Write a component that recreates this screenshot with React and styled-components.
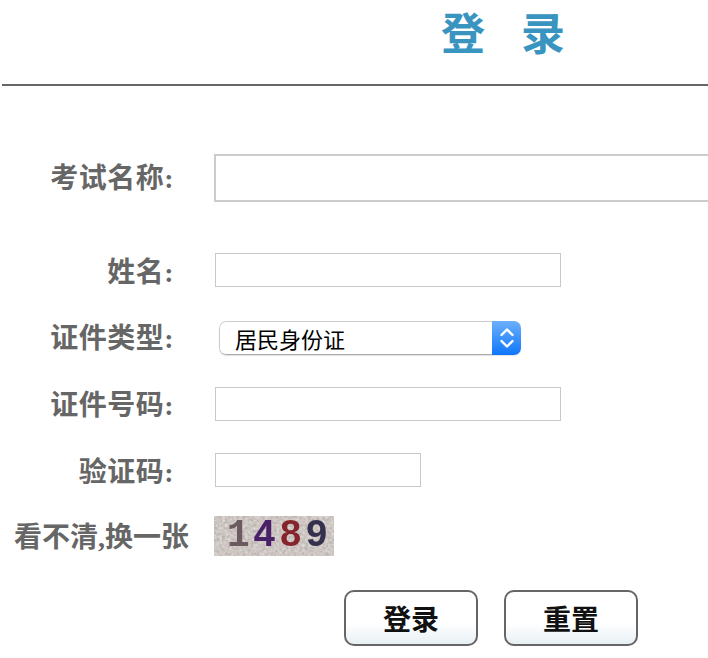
import React from 'react'
import styled, { createGlobalStyle } from 'styled-components'

const GlobalStyle = createGlobalStyle`
  html, body {
    margin: 0;
    background: #fff;
    overflow: hidden;
  }
  body {
    font-family: "Liberation Serif", "Noto Sans CJK SC", serif;
  }
`

const Page = styled.div`
  width: 708px;
  height: 658px;
  overflow: hidden;
`

const Header = styled.header`
  height: 86px;
  margin-left: 2px;
  padding-left: 439px;
  box-sizing: border-box;
  border-bottom: 2px solid #666;
`

const Title = styled.h1`
  margin: 0;
  padding-top: 6px;
  font-size: 44px;
  line-height: 60px;
  font-weight: bold;
  letter-spacing: 36px;
  white-space: nowrap;
  color: #3a94c0;
`

const Form = styled.form`
  display: flex;
  flex-direction: column;
  padding-top: 68px;
`

const Row = styled.div`
  display: flex;
  align-items: center;
  height: ${(p) => p.$height}px;
  margin-bottom: ${(p) => p.$gap}px;
`

const Label = styled.label`
  flex: none;
  box-sizing: border-box;
  width: 215px;
  padding-right: 41px;
  padding-bottom: ${(p) => p.$lift || 0}px;
  text-align: right;
  font-size: 28px;
  font-weight: bold;
  letter-spacing: 0.5px;
  color: #666;
  white-space: nowrap;
`

const WideInput = styled.input`
  flex: none;
  box-sizing: border-box;
  width: 540px;
  height: 48px;
  margin-left: -1px;
  border: 2px solid #ccc;
  background: #fff;
  outline: none;
`

const TextInput = styled.input`
  flex: none;
  box-sizing: border-box;
  width: ${(p) => p.$width}px;
  height: 34px;
  border: 1px solid #c8c8c8;
  background: #fff;
  outline: none;
`

const SelectBox = styled.div`
  flex: none;
  display: flex;
  box-sizing: border-box;
  width: 302px;
  height: 34px;
  margin-left: 4px;
  border-radius: 7px;
  background: #fff;
  box-shadow: 0 1px 1px rgba(0, 0, 0, 0.12);
  overflow: hidden;
`

const SelectValue = styled.span`
  flex: 1;
  padding: 6px 0 0 15px;
  border: 1px solid #ccc;
  border-right: none;
  border-bottom-color: #aaa;
  border-radius: 7px 0 0 7px;
  font-size: 22px;
  line-height: 26px;
  color: #000;
`

const SelectCap = styled.span`
  flex: none;
  display: flex;
  align-items: center;
  justify-content: center;
  width: 29px;
  background: linear-gradient(#6cb0fb, #0f76fb);
`

const CaptchaLabel = styled.a`
  flex: none;
  box-sizing: border-box;
  width: 214px;
  padding-left: 14px;
  padding-bottom: 2px;
  font-size: 28px;
  font-weight: bold;
  color: #666;
  white-space: nowrap;
`

const Captcha = styled.div`
  position: relative;
  flex: none;
  display: flex;
  align-items: center;
  justify-content: space-between;
  box-sizing: border-box;
  width: 120px;
  height: 40px;
  padding: 0 6px 0 13px;
  background: #b5aca8;
`

const CaptchaNoise = styled.svg`
  position: absolute;
  inset: 0;
`

const Digit = styled.span`
  position: relative;
  font-family: "Liberation Mono", monospace;
  font-size: 38px;
  line-height: 40px;
  font-weight: bold;
  color: ${(p) => p.$color};
  filter: blur(0.7px);
`

const Actions = styled.div`
  display: flex;
  gap: 26px;
  padding-left: 344px;
`

const Button = styled.button`
  box-sizing: border-box;
  width: 134px;
  height: 56px;
  padding: 0;
  border: 2px solid #666;
  border-radius: 10px;
  background: linear-gradient(#fff 0%, #fff 60%, #e8f0f4 100%);
  font-family: inherit;
  font-size: 28px;
  font-weight: bold;
  color: #111;
`

const digits = [
  { value: '1', color: '#6b5a60' },
  { value: '4', color: '#4a2168' },
  { value: '8', color: '#86242c' },
  { value: '9', color: '#35304e' },
]

export default function App() {
  return (
    <Page>
      <GlobalStyle />
      <Header>
        <Title>登录</Title>
      </Header>
      <Form onSubmit={(e) => e.preventDefault()}>
        <Row $height={48} $gap={51}>
          <Label $lift={5}>考试名称:</Label>
          <WideInput />
        </Row>
        <Row $height={34} $gap={34}>
          <Label>姓名:</Label>
          <TextInput $width={346} />
        </Row>
        <Row $height={34} $gap={32}>
          <Label $lift={4}>证件类型:</Label>
          <SelectBox>
            <SelectValue>居民身份证</SelectValue>
            <SelectCap>
              <svg width="14" height="22" viewBox="0 0 14 22" fill="none" stroke="#fff" strokeWidth="2.4" strokeLinecap="round" strokeLinejoin="round">
                <path d="M1.5 8L7 2.5 12.5 8" />
                <path d="M1.5 14L7 19.5 12.5 14" />
              </svg>
            </SelectCap>
          </SelectBox>
        </Row>
        <Row $height={34} $gap={32}>
          <Label $lift={2}>证件号码:</Label>
          <TextInput $width={346} />
        </Row>
        <Row $height={34} $gap={29}>
          <Label>验证码:</Label>
          <TextInput $width={206} />
        </Row>
        <Row $height={40} $gap={34}>
          <CaptchaLabel>看不清,换一张</CaptchaLabel>
          <Captcha>
            <CaptchaNoise width="120" height="40">
              <filter id="grain">
                <feTurbulence type="fractalNoise" baseFrequency="0.35" numOctaves="3" seed="4" />
                <feColorMatrix values="0 0 0 0 0.95  0 0 0 0 0.92  0 0 0 0 0.9  0.9 0 0 0 -0.1" />
              </filter>
              <rect width="120" height="40" filter="url(#grain)" />
            </CaptchaNoise>
            {digits.map((d) => (
              <Digit key={d.value} $color={d.color}>{d.value}</Digit>
            ))}
          </Captcha>
        </Row>
        <Actions>
          <Button type="submit">登录</Button>
          <Button type="reset">重置</Button>
        </Actions>
      </Form>
    </Page>
  )
}
